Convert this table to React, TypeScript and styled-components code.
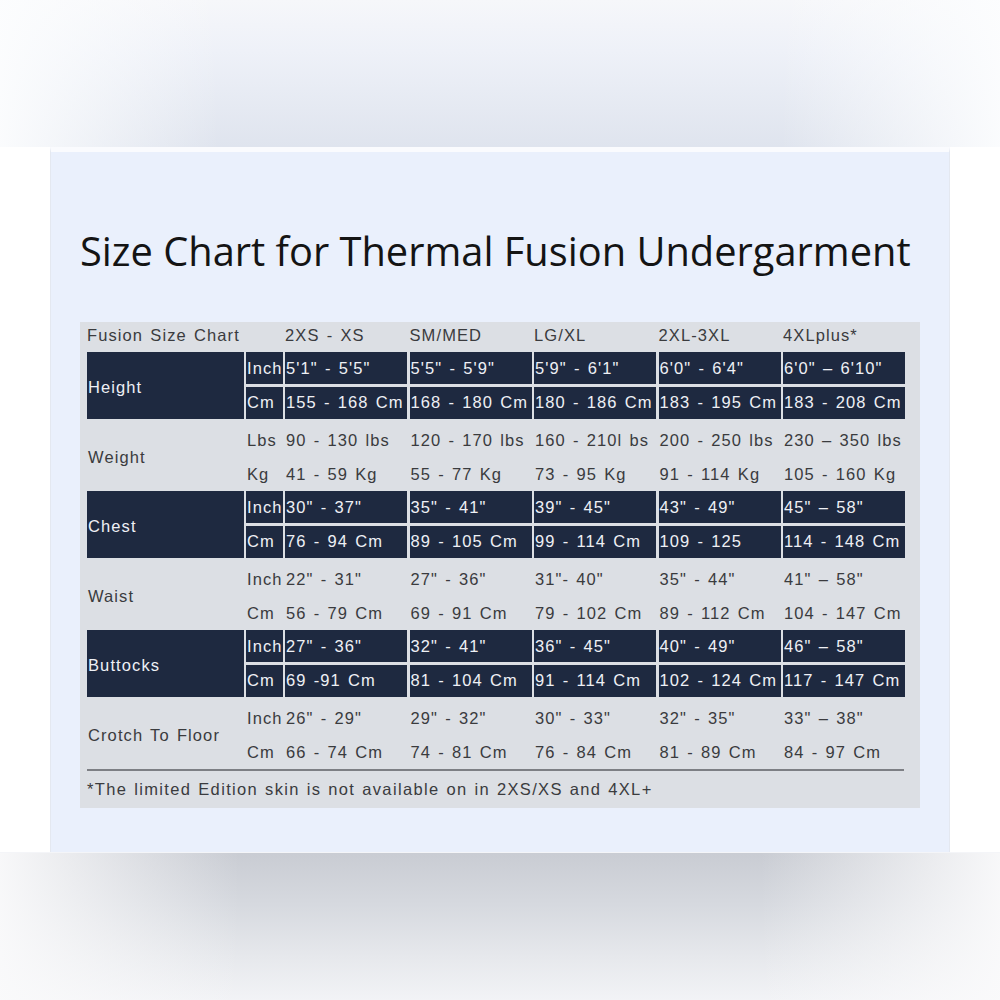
import React from "react";
import styled, { createGlobalStyle } from "styled-components";

const Global = createGlobalStyle`
  html, body { margin: 0; padding: 0; background: #ffffff; }
  #root { width: 1000px; height: 1000px; }
`;

const Page = styled.div`
  width: 1000px;
  height: 1000px;
  display: flex;
  flex-direction: column;
  overflow: hidden;
`;

const TopBand = styled.div`
  height: 147px;
  flex: none;
  background:
    linear-gradient(to right, rgba(252,253,254,0.95) 0%, rgba(252,253,254,0) 22%, rgba(252,253,254,0) 78%, rgba(252,253,254,0.95) 100%),
    linear-gradient(to bottom, #f6f7fa 0%, #eef1f8 35%, #dfe4ee 100%);
`;

const BottomBand = styled.div`
  flex: 1;
  border-top: 1px solid #f4f5f8;
  background:
    linear-gradient(to right, rgba(250,250,251,0.95) 0%, rgba(250,250,251,0) 24%, rgba(250,250,251,0) 76%, rgba(250,250,251,0.95) 100%),
    linear-gradient(to bottom, #c9ccd3 0%, #d6d9df 35%, #e6e8ec 70%, #f2f3f6 100%);
`;

const Middle = styled.div`
  height: 705px;
  flex: none;
  display: flex;
  justify-content: center;
  background: #ffffff;
`;

const Sheet = styled.div`
  width: 900px;
  box-sizing: border-box;
  background: #eaf0fc;
  border-top: 5px solid #fafbfe;
  border-left: 1px solid #e4e8f0;
  border-right: 1px solid #e4e8f0;
  padding: 0 0 0 29px;
  display: flex;
  flex-direction: column;
`;

const Title = styled.h1`
  margin: 75px 0 0 0;
  font-family: "Open Sans", "Noto Sans", sans-serif;
  font-weight: 400;
  font-size: 39.8px;
  line-height: 47px;
  color: #141414;
  white-space: nowrap;
`;

const Panel = styled.div`
  margin-top: 48px;
  width: 840px;
  height: 486px;
  box-sizing: border-box;
  background: #dcdfe4;
  padding: 0 15px 0 7px;
  display: flex;
  flex-direction: column;
`;

const Grid = styled.div`
  display: grid;
  grid-template-columns: 156.5px 36.5px repeat(5, 122px);
  grid-template-rows: 27.25px repeat(12, 32px);
  column-gap: 2.5px;
  row-gap: 2.75px;
  font-family: "Liberation Sans", Arial, sans-serif;
  font-size: 16.5px;
  letter-spacing: 1.1px;
  word-spacing: 1.5px;
`;

const Cell = styled.div<{ $dark?: boolean; $label?: boolean }>`
  display: flex;
  align-items: center;
  box-sizing: border-box;
  padding-left: 1px;
  padding-top: ${(p) => (p.$label ? 5 : p.$dark ? 0 : 5)}px;
  white-space: nowrap;
  overflow: hidden;
  background: ${(p) => (p.$dark ? "#1e2940" : "transparent")};
  color: ${(p) => (p.$dark ? "#eef0f5" : "#3a3b3e")};
  ${(p) => (p.$label ? "grid-row: span 2;" : "")}
`;

const Head = styled.div<{ $wide?: boolean }>`
  display: flex;
  align-items: center;
  white-space: nowrap;
  color: #3a3b3e;
  ${(p) => (p.$wide ? "grid-column: span 2;" : "")}
`;

const Footer = styled.div`
  margin-top: 3px;
  width: 817px;
  border-top: 2px solid #7d7f84;
  height: 36px;
  display: flex;
  align-items: center;
  font-family: "Liberation Sans", Arial, sans-serif;
  font-size: 16.5px;
  letter-spacing: 1.35px;
  word-spacing: 1px;
  color: #3a3b3e;
  white-space: nowrap;
`;

type Group = {
  label: string;
  dark: boolean;
  rows: { unit: string; values: string[] }[];
};

const groups: Group[] = [
  {
    label: "Height",
    dark: true,
    rows: [
      { unit: "Inch", values: ['5\'1" - 5\'5"', '5\'5" - 5\'9"', '5\'9" - 6\'1"', '6\'0" - 6\'4"', '6\'0" \u2013 6\'10"'] },
      { unit: "Cm", values: ["155 - 168 Cm", "168 - 180 Cm", "180 - 186 Cm", "183 - 195 Cm", "183 - 208 Cm"] },
    ],
  },
  {
    label: "Weight",
    dark: false,
    rows: [
      { unit: "Lbs", values: ["90 - 130 lbs", "120 - 170 lbs", "160 - 210l bs", "200 - 250 lbs", "230 \u2013 350 lbs"] },
      { unit: "Kg", values: ["41 - 59 Kg", "55 - 77 Kg", "73 - 95 Kg", "91 - 114 Kg", "105 - 160 Kg"] },
    ],
  },
  {
    label: "Chest",
    dark: true,
    rows: [
      { unit: "Inch", values: ['30" - 37"', '35" - 41"', '39" - 45"', '43" - 49"', '45" \u2013 58"'] },
      { unit: "Cm", values: ["76 - 94 Cm", "89 - 105 Cm", "99 - 114 Cm", "109 - 125", "114 - 148 Cm"] },
    ],
  },
  {
    label: "Waist",
    dark: false,
    rows: [
      { unit: "Inch", values: ['22" - 31"', '27" - 36"', '31"- 40"', '35" - 44"', '41" \u2013 58"'] },
      { unit: "Cm", values: ["56 - 79 Cm", "69 - 91 Cm", "79 - 102 Cm", "89 - 112 Cm", "104 - 147 Cm"] },
    ],
  },
  {
    label: "Buttocks",
    dark: true,
    rows: [
      { unit: "Inch", values: ['27" - 36"', '32" - 41"', '36" - 45"', '40" - 49"', '46" \u2013 58"'] },
      { unit: "Cm", values: ["69 -91 Cm", "81 - 104 Cm", "91 - 114 Cm", "102 - 124 Cm", "117 - 147 Cm"] },
    ],
  },
  {
    label: "Crotch To Floor",
    dark: false,
    rows: [
      { unit: "Inch", values: ['26" - 29"', '29" - 32"', '30" - 33"', '32" - 35"', '33" \u2013 38"'] },
      { unit: "Cm", values: ["66 - 74 Cm", "74 - 81 Cm", "76 - 84 Cm", "81 - 89 Cm", "84 - 97 Cm"] },
    ],
  },
];

const sizes = ["2XS - XS", "SM/MED", "LG/XL", "2XL-3XL", "4XLplus*"];

export default function App() {
  return (
    <>
      <Global />
      <Page>
        <TopBand />
        <Middle>
          <Sheet>
            <Title>Size Chart for Thermal Fusion Undergarment</Title>
            <Panel>
              <Grid>
                <Head $wide>Fusion Size Chart</Head>
                {sizes.map((s) => (
                  <Head key={s}>{s}</Head>
                ))}
                {groups.map((g) => (
                  <React.Fragment key={g.label}>
                    {g.rows.map((r, i) => (
                      <React.Fragment key={r.unit}>
                        {i === 0 && (
                          <Cell $dark={g.dark} $label>
                            {g.label}
                          </Cell>
                        )}
                        <Cell $dark={g.dark}>{r.unit}</Cell>
                        {r.values.map((v, j) => (
                          <Cell key={j} $dark={g.dark}>
                            {v}
                          </Cell>
                        ))}
                      </React.Fragment>
                    ))}
                  </React.Fragment>
                ))}
              </Grid>
              <Footer>*The limited Edition skin is not available on in 2XS/XS and 4XL+</Footer>
            </Panel>
          </Sheet>
        </Middle>
        <BottomBand />
      </Page>
    </>
  );
}
